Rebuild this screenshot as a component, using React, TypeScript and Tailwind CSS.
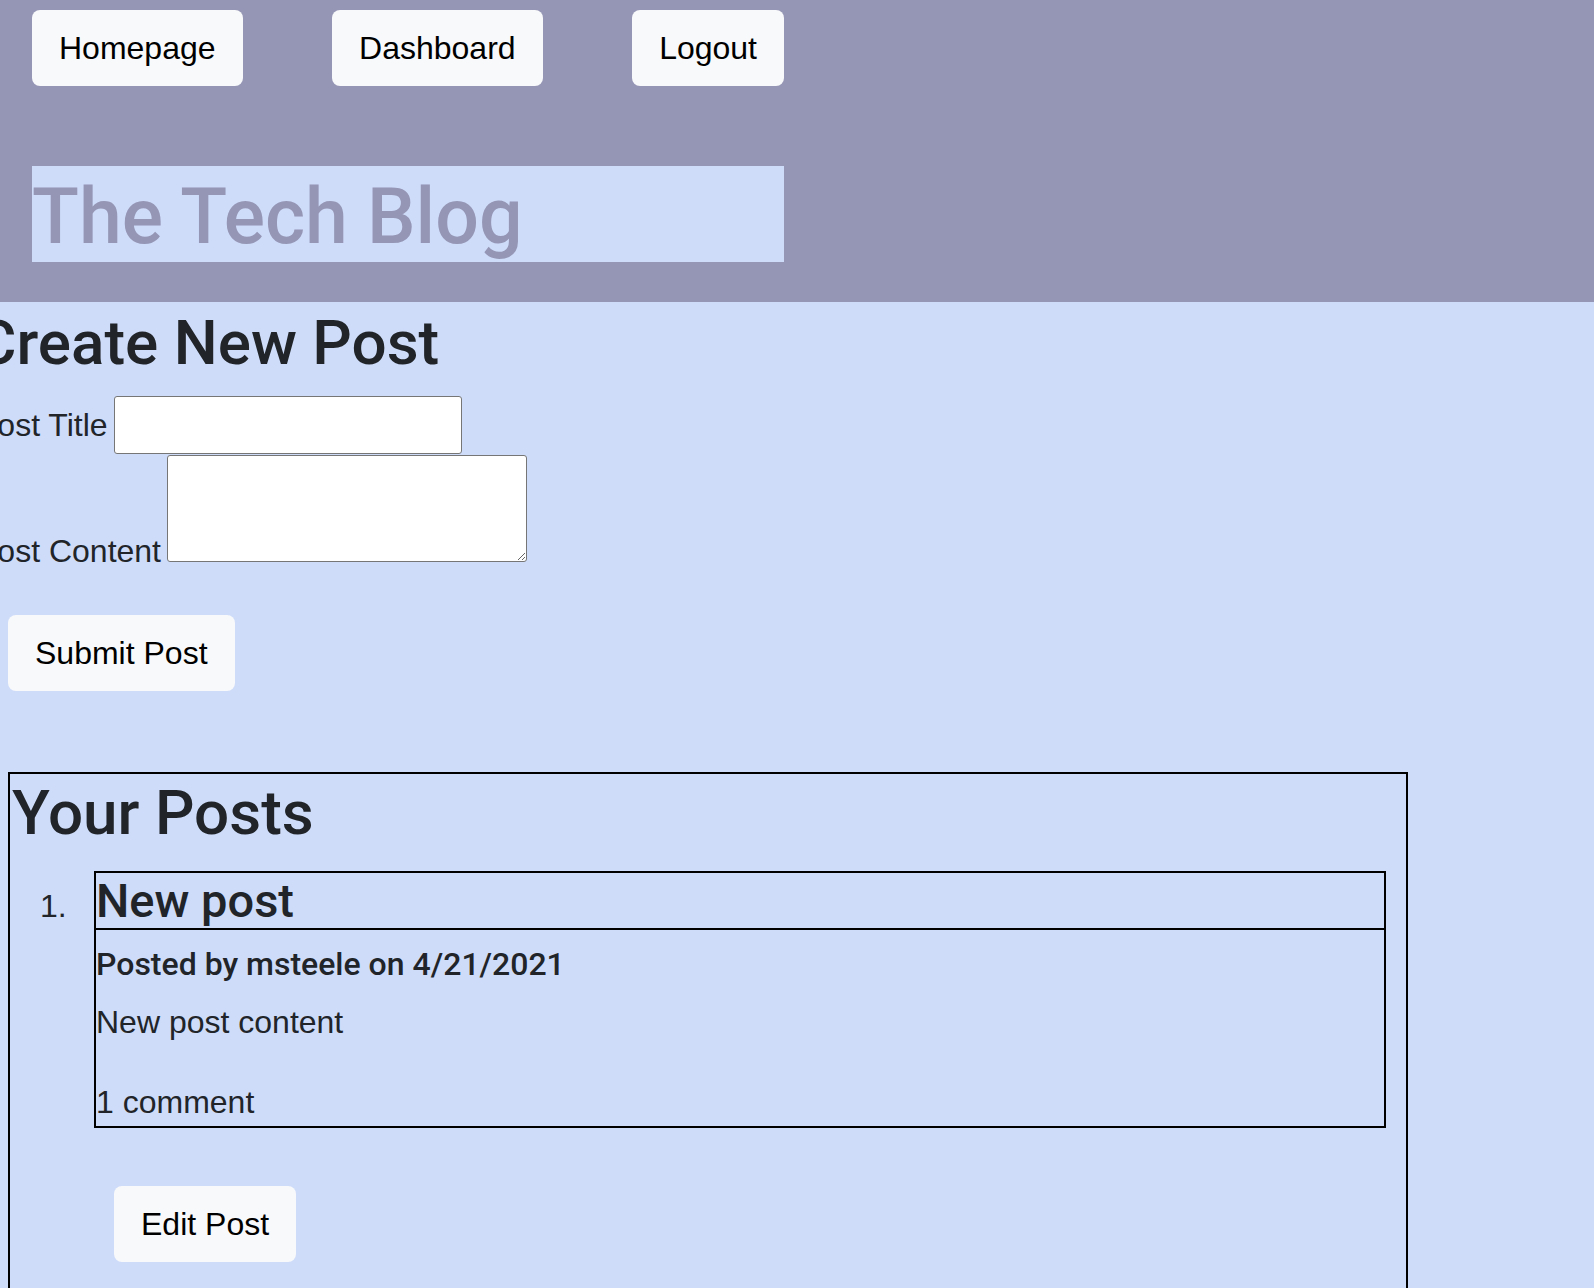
import React from 'react';

const btn =
  "block rounded-lg border border-transparent bg-[#f8f9fa] px-[26px] py-[13px] text-[32px] leading-[48px] text-black";
const heading = "font-['Roboto','Liberation_Sans',sans-serif] font-medium";

export default function App() {
  return (
    <div className="min-h-screen bg-[#cedcfa] font-['Liberation_Sans',Arial,sans-serif] text-[#212529]">
      {/* Header */}
      <header className="bg-[#9596b5] pb-[40px] pl-[32px] pt-[10px]">
        <div className="w-[752px]">
          <nav className="flex justify-between">
            <button className={btn}>Homepage</button>
            <button className={btn}>Dashboard</button>
            <button className={btn}>Logout</button>
          </nav>
          <div className="mt-[80px] h-[96px] bg-[#cedcfa] pt-[6px]">
            <h1 className={`${heading} text-[77px] leading-[90px] text-[#9596b5]`}>The Tech Blog</h1>
          </div>
        </div>
      </header>

      <main>
        {/* New post form */}
        <section className="-ml-[24px] pt-[4px]">
          <h1 className={`${heading} mb-[16px] text-[62px] leading-[1.2]`}>Create New Post</h1>
          <form className="text-[32px] leading-[48px]">
            <div className="flex items-center gap-[6px]">
              <label htmlFor="post-title">Post Title</label>
              <input
                id="post-title"
                type="text"
                className="h-[58px] w-[348px] rounded-[3px] border border-[#767676] bg-white"
              />
            </div>
            <div className="flex items-end gap-[6px]">
              <label htmlFor="post-content" className="-mb-[13px]">
                Post Content
              </label>
              <textarea
                id="post-content"
                className="mt-px h-[107px] w-[360px] rounded-[3px] border border-[#767676] bg-white"
              />
            </div>
            <button type="button" className={`${btn} ml-[32px] mt-[53px]`}>
              Submit Post
            </button>
          </form>
        </section>

        {/* Your posts */}
        <section className="ml-[8px] mt-[81px] w-[1400px] border-2 border-black pb-[60px]">
          <h1 className={`${heading} mt-[2px] pl-[2px] text-[62px] leading-[1.2]`}>Your Posts</h1>
          <ol className="mt-[20px] pl-[30px] pr-[20px] text-[32px] leading-[48px]">
            <li>
              <div className="flex items-baseline">
                <span className="w-[54px] shrink-0">1.</span>
                <article className="flex-1 border-2 border-black">
                  <h2 className={`${heading} border-b-2 border-black text-[47px] leading-[55px]`}>New post</h2>
                  <h5 className={`${heading} mb-[15px] mt-[15px] text-[32px] leading-[1.2]`}>
                    Posted by msteele on 4/21/2021
                  </h5>
                  <p className="mb-[32px]">New post content</p>
                  <p>1 comment</p>
                </article>
              </div>
              <button type="button" className={`${btn} ml-[74px] mt-[58px]`}>
                Edit Post
              </button>
            </li>
          </ol>
        </section>
      </main>
    </div>
  );
}
